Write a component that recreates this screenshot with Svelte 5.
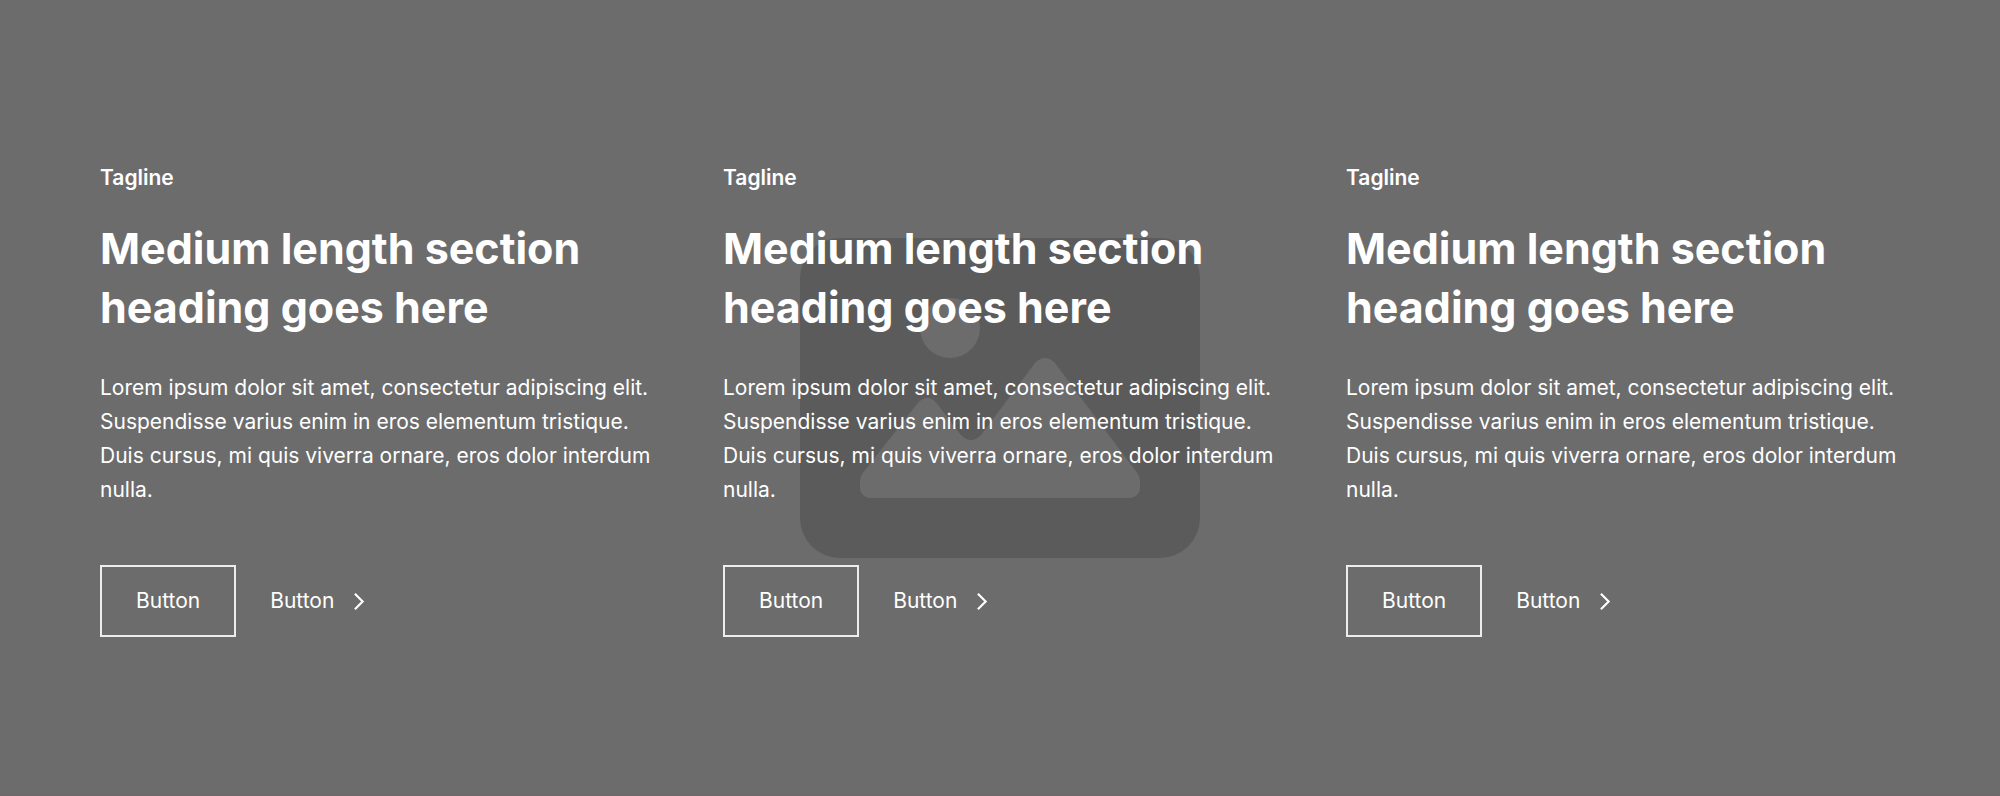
<script lang="ts">
  interface Column {
    id: number;
    tagline: string;
    heading: string;
    text: string;
  }

  const columns: Column[] = [1, 2, 3].map((id) => ({
    id,
    tagline: "Tagline",
    heading: "Medium length section heading goes here",
    text: "Lorem ipsum dolor sit amet, consectetur adipiscing elit. Suspendisse varius enim in eros elementum tristique. Duis cursus, mi quis viverra ornare, eros dolor interdum nulla."
  }));
</script>

<section class="layout">
  <div class="background">
    <svg class="placeholder" viewBox="0 0 400 320" aria-hidden="true">
      <path
        fill="#5b5b5b"
        fill-rule="evenodd"
        d="M40 0H360A40 40 0 0 1 400 40V280A40 40 0 0 1 360 320H40A40 40 0 0 1 0 280V40A40 40 0 0 1 40 0Z
          M150 60A30 30 0 1 0 150 120A30 30 0 1 0 150 60Z
          M235 125L181 197Q171 207 161 197L138 167Q128 153 117 166L62 236Q60 239 60 243V250A10 10 0 0 0 70 260H330A10 10 0 0 0 340 250V243Q340 239 338 236L255 125Q245 115 235 125Z"
      />
    </svg>
  </div>

  <div class="grid">
    {#each columns as column (column.id)}
      <article class="column">
        <p class="tagline">{column.tagline}</p>
        <h2>{column.heading}</h2>
        <p class="text">{column.text}</p>
        <div class="actions">
          <button class="btn outline" type="button">Button</button>
          <button class="btn link" type="button">
            Button
            <svg class="chevron" viewBox="0 0 16 16" aria-hidden="true">
              <path d="M4.8 2.6L10.2 8L4.8 13.4" fill="none" stroke="currentColor" stroke-width="1.5" />
            </svg>
          </button>
        </div>
      </article>
    {/each}
  </div>
</section>

<style>
  :global(body) {
    margin: 0;
    background: #6c6c6c;
  }

  .layout {
    position: relative;
    box-sizing: border-box;
    min-height: 100vh;
    padding: 161px 5% 158px;
    background: #6c6c6c;
    border-bottom: 1px solid #6f686d;
    color: #fff;
    font-family: Inter, "Liberation Sans", sans-serif;
    font-size: 21px;
    line-height: 34px;
  }

  .background {
    position: absolute;
    inset: 0;
    display: flex;
    align-items: center;
    justify-content: center;
  }

  .placeholder {
    width: 20%;
  }

  .grid {
    position: relative;
    display: grid;
    grid-template-columns: repeat(3, 1fr);
    gap: 69px;
  }

  .tagline {
    margin: 0 0 24px;
    font-weight: 600;
  }

  h2 {
    margin: 0 0 34px;
    font-size: 43px;
    font-weight: 700;
    line-height: 59px;
  }

  .text {
    margin: 0;
  }

  .actions {
    display: flex;
    align-items: center;
    gap: 34px;
    margin-top: 58px;
  }

  .btn {
    display: flex;
    align-items: center;
    gap: 14px;
    padding: 0;
    border: 0;
    background: none;
    color: inherit;
    font: inherit;
    cursor: pointer;
  }

  .outline {
    padding: 17px 34px;
    border: 2px solid #ededed;
  }

  .chevron {
    width: 23px;
    height: 23px;
  }
</style>
